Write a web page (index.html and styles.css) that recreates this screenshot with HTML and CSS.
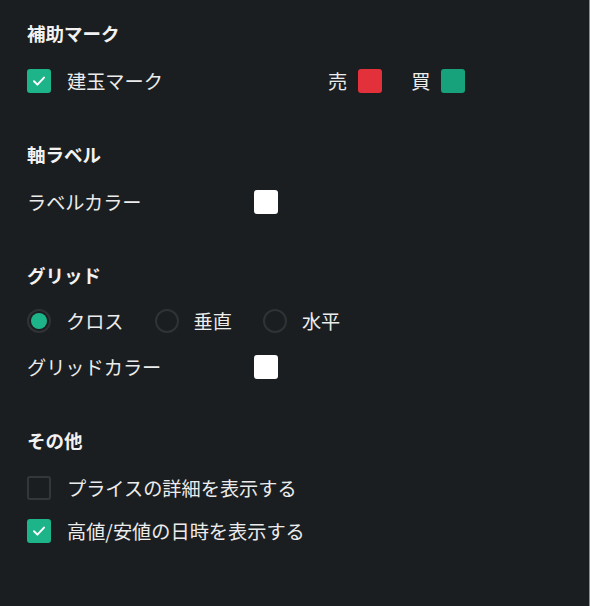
FILE: index.html
```html
<!DOCTYPE html>
<html lang="ja">
<head>
<meta charset="utf-8">
<link rel="stylesheet" href="styles.css">
</head>
<body>
<div class="panel">
  <section class="section">
    <h2 class="heading">補助マーク</h2>
    <div class="row">
      <label class="opt opt-wide">
        <span class="check checked"><svg viewBox="0 0 24 24" width="24" height="24"><path d="M7 12.2l3.4 3.4 6.6-7" fill="none" stroke="#fff" stroke-width="2" stroke-linecap="round" stroke-linejoin="round"/></svg></span>
        <span class="text">建玉マーク</span>
      </label>
      <div class="pair">
        <span class="text">売</span><span class="swatch red"></span>
      </div>
      <div class="pair pair-buy">
        <span class="text">買</span><span class="swatch green"></span>
      </div>
    </div>
  </section>

  <section class="section">
    <h2 class="heading">軸ラベル</h2>
    <div class="row">
      <span class="text label-col">ラベルカラー</span>
      <span class="swatch white"></span>
    </div>
  </section>

  <section class="section">
    <h2 class="heading">グリッド</h2>
    <div class="row radios">
      <label class="opt"><span class="radio checked"><span class="dot"></span></span><span class="text">クロス</span></label>
      <label class="opt"><span class="radio"></span><span class="text">垂直</span></label>
      <label class="opt"><span class="radio"></span><span class="text">水平</span></label>
    </div>
    <div class="row row-tight">
      <span class="text label-col">グリッドカラー</span>
      <span class="swatch white"></span>
    </div>
  </section>

  <section class="section">
    <h2 class="heading">その他</h2>
    <div class="row">
      <label class="opt">
        <span class="check"></span>
        <span class="text">プライスの詳細を表示する</span>
      </label>
    </div>
    <div class="row row-tighter">
      <label class="opt">
        <span class="check checked"><svg viewBox="0 0 24 24" width="24" height="24"><path d="M7 12.2l3.4 3.4 6.6-7" fill="none" stroke="#fff" stroke-width="2" stroke-linecap="round" stroke-linejoin="round"/></svg></span>
        <span class="text">高値/安値の日時を表示する</span>
      </label>
    </div>
  </section>
</div>
</body>
</html>
```

FILE: styles.css
```css
html, body {
  margin: 0;
  padding: 0;
  background: #1b1e20;
}
body {
  width: 590px;
  height: 606px;
  box-shadow: inset -1px 0 0 #8d9093;
  font-family: "Noto Sans CJK JP", "Noto Sans", sans-serif;
  color: #ececec;
}
.panel {
  padding: 23px 0 0 27px;
  display: flex;
  flex-direction: column;
  gap: 51px;
}
.section {
  display: flex;
  flex-direction: column;
}
.heading {
  margin: 0 0 26px 0;
  font-size: 18.5px;
  line-height: 20px;
  height: 20px;
  font-weight: 700;
  color: #f2f2f2;
}
.row {
  display: flex;
  align-items: center;
  height: 24px;
}
.row-tight { margin-top: 22px; }
.row-tighter { margin-top: 19px; }
.radios { margin-top: -2px; }
.text {
  font-size: 19.2px;
  line-height: 24px;
  white-space: nowrap;
}
.opt {
  display: flex;
  align-items: center;
  gap: 16px;
}
.opt-wide { width: 301px; }
.label-col { width: 227px; }
.check {
  width: 24px;
  height: 24px;
  box-sizing: border-box;
  border-radius: 3px;
  border: 2px solid #34373a;
  display: block;
  flex: none;
}
.check.checked {
  background: #1eb48a;
  border: none;
}
.check svg { display: block; }
.pair {
  display: flex;
  align-items: center;
  gap: 11px;
}
.pair-buy { margin-left: 29px; }
.swatch {
  width: 24px;
  height: 24px;
  border-radius: 3px;
  display: block;
}
.red { background: #e3313b; }
.green { background: #17a27b; }
.white { background: #ffffff; }
.radios { gap: 31px; }
.radios .opt { gap: 15px; }
.radio {
  width: 24px;
  height: 24px;
  box-sizing: border-box;
  border-radius: 50%;
  border: 2px solid #303335;
  display: flex;
  align-items: center;
  justify-content: center;
  flex: none;
}
.dot {
  width: 16px;
  height: 16px;
  border-radius: 50%;
  background: #1eb48a;
}
```
